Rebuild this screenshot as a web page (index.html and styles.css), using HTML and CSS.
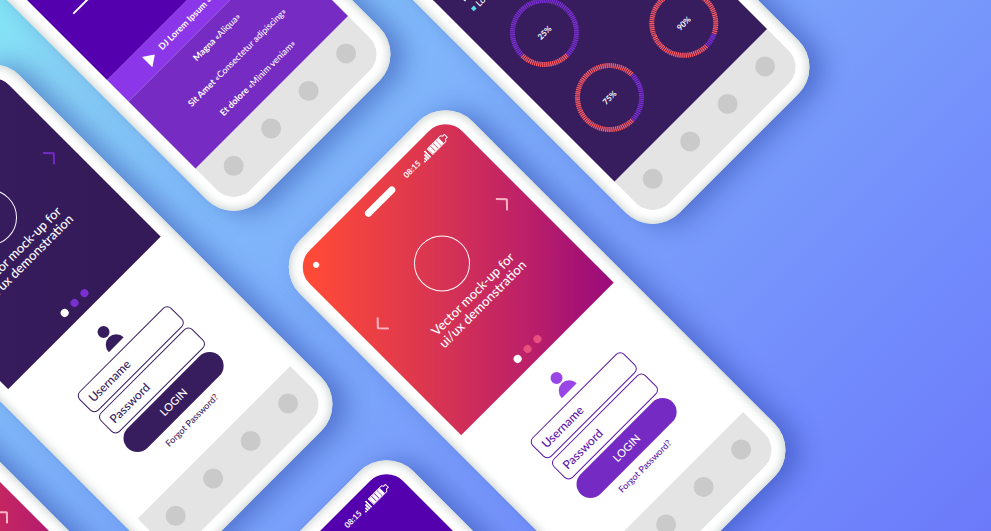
FILE: index.html
```
<!DOCTYPE html>
<html lang="en">
<head>
<meta charset="utf-8">
<title>App screens</title>
<link rel="stylesheet" href="styles.css">
</head>
<body>
<svg class="defs" aria-hidden="true">
  <symbol id="signal" viewBox="0 0 9 9"><path d="M0 7h1.800v2H0zM2.400 5h1.800v4H2.400zM4.800 2.600h1.800V9H4.800zM7.200 0H9v9H7.200z"/></symbol>
  <symbol id="battery" viewBox="0 0 24 9"><path d="M.5.5H19L20.500 2.500H23v4h-2.500L19 8.500H.5z" fill="none" stroke="currentColor"/><path d="M1 1h3.400v7H1zM5 1h3.400v7H5zM9 1h3.400v7H9zM13 1h3.400v7H13z"/></symbol>
  <symbol id="prev" viewBox="0 0 9 17"><path d="M8.500.5.8 8.500l7.700 8" fill="none" stroke="currentColor" stroke-width="2"/></symbol>
  <symbol id="next" viewBox="0 0 9 17"><path d="M.5.5l7.700 8-7.700 8" fill="none" stroke="currentColor" stroke-width="2"/></symbol>
  <symbol id="person" viewBox="0 0 22 26"><circle cx="11" cy="7" r="6"/><path d="M.5 25a10.500 10.500 0 0 1 21 0z"/></symbol>
</svg>
<main class="canvas">

  <article class="phone at-music">
    <div class="screen">
      <div class="player"><div class="track"></div></div>
      <div class="now"><svg class="play" viewBox="0 0 11 15"><path d="M0 0 11 7.500 0 15z"/></svg><span><b>DJ Lorem Ipsum</b> «Dolor»</span></div>
      <ul class="songs">
        <li><b>Magna</b> «Aliqua»</li>
        <li><b>Sit Amet</b> «Consectetur adipiscing»</li>
        <li><b>Et dolore</b> «Minim veniam»</li>
      </ul>
      <nav class="keys"><i></i><i></i><i></i><i></i></nav>
    </div>
  </article>

  <article class="phone at-stats">
    <div class="screen">
      <div class="board">
        <div class="legend"><b>Is</b><span class="key">Lorem</span></div>
        <div class="rings">
          <svg class="ring" viewBox="0 0 70 70"><path class="rest" pathLength="225" d="M3 35A32 32 0 1 1 35 67"/><path class="part" pathLength="75" d="M35 67A32 32 0 0 1 3 35"/><text x="35" y="38">25%</text></svg>
          <svg class="ring below" viewBox="0 0 70 70"><path class="rest" pathLength="75" d="M67 35A32 32 0 0 1 35 67"/><path class="part" pathLength="225" d="M35 67A32 32 0 1 1 67 35"/><text x="35" y="38">75%</text></svg>
          <svg class="ring below" viewBox="0 0 70 70"><path class="rest" pathLength="21" d="M48.500 64A32 32 0 0 1 35 67"/><path class="part" pathLength="279" d="M35 67A32 32 0 1 1 48.500 64"/><text x="35" y="38">90%</text></svg>
        </div>
      </div>
      <nav class="keys"><i></i><i></i><i></i><i></i></nav>
    </div>
  </article>

  <article class="phone dark at-left">
    <div class="screen">
      <section class="hero">
        <div class="row"><svg class="arrow"><use href="#prev"/></svg><span class="disc"></span><svg class="arrow"><use href="#next"/></svg></div>
        <p class="title">Vector mock-up for<br>ui/ux demonstration</p>
        <div class="dots"><i></i><i></i><i></i></div>
      </section>
      <form class="login">
        <svg class="person"><use href="#person"/></svg>
        <input type="text" placeholder="Username" aria-label="Username">
        <input type="password" placeholder="Password" aria-label="Password">
        <button type="button">LOGIN</button>
        <a href="#">Forgot Password?</a>
      </form>
      <nav class="keys"><i></i><i></i><i></i><i></i></nav>
    </div>
  </article>

  <article class="phone at-corner">
    <div class="screen">
      <section class="hero">
        <div class="row"><svg class="arrow"><use href="#prev"/></svg><span class="disc"></span><svg class="arrow"><use href="#next"/></svg></div>
      </section>
    </div>
  </article>

  <article class="phone violet at-bottom">
    <div class="screen">
      <section class="hero">
        <div class="status"><span class="camera"></span><span class="speaker"></span><span class="time">08:15</span><svg class="signal"><use href="#signal"/></svg><svg class="battery"><use href="#battery"/></svg></div>
      </section>
    </div>
  </article>

  <article class="phone at-center">
    <div class="screen">
      <section class="hero">
        <div class="status"><span class="camera"></span><span class="speaker"></span><span class="time">08:15</span><svg class="signal"><use href="#signal"/></svg><svg class="battery"><use href="#battery"/></svg></div>
        <div class="row"><svg class="arrow"><use href="#prev"/></svg><span class="disc"></span><svg class="arrow"><use href="#next"/></svg></div>
        <p class="title">Vector mock-up for<br>ui/ux demonstration</p>
        <div class="dots"><i></i><i></i><i></i></div>
      </section>
      <form class="login">
        <svg class="person"><use href="#person"/></svg>
        <input type="text" placeholder="Username" aria-label="Username">
        <input type="password" placeholder="Password" aria-label="Password">
        <button type="button">LOGIN</button>
        <a href="#">Forgot Password?</a>
      </form>
      <nav class="keys"><i></i><i></i><i></i><i></i></nav>
    </div>
  </article>
</main>
</body>
</html>
```
FILE: styles.css
```
* { box-sizing: border-box; }

body {
  margin: 0;
  font-family: Lato, "Open Sans", sans-serif;
  font-weight: 500;
  color: #fff;
}

.defs { display: none; }

.canvas {
  position: relative;
  height: 100vh;
  overflow: hidden;
  background: linear-gradient(135deg, #84e6f6 0%, #88d2f6 9%, #82bdfa 24%, #7cabfa 42%, #7899fb 62%, #718afc 80%, #6c7afa 100%);
}

/* Phones lie on a free canvas, each turned an eighth of the way left */
.phone {
  --ink: #5a14a8;
  --accent: #752bc3;
  --figure: #9a45e6;
  --dot: #ea4d7f;
  --arrow: #f8b4c4;
  --hero: linear-gradient(135deg, #ff4a38 6%, #db3650 42%, #bd2168 72%, #9c0b7a 98%);
  position: absolute;
  width: 244px;
  padding: 14px;
  border-radius: 38px;
  background: #fff;
  box-shadow: inset 0 0 8px 2px #ccd4d1, 9px 11px 24px rgba(35, 60, 160, .45);
  transform: rotate(-45deg);
  transform-origin: 0 0;
}

.dark {
  --ink: #371c5e;
  --accent: #371c5e;
  --figure: #371c5e;
  --dot: #7a2fd0;
  --arrow: #7428c4;
  --hero: linear-gradient(135deg, #3a1f62, #341958);
}

.violet { --hero: #5500ae; }

.at-music { left: -122px; top: -129px; }
.at-stats { left: 297px; top: -116px; }
.at-left { left: -180px; top: 221px; }
.at-corner { left: -227px; top: 580px; }
.at-bottom { left: 214px; top: 617px; }
.at-center { left: 273px; top: 267px; }

.screen {
  display: flex;
  flex-direction: column;
  min-height: 475px;
  border-radius: 24px;
  overflow: hidden;
  background: #fff;
}

/* Upper panel */
.hero {
  display: grid;
  grid-template-rows: 75px 56px 52px 55px;
  background: var(--hero);
}

.status {
  grid-row: 1;
  display: grid;
  grid-template-columns: 73px 55px 24px 11px 24px;
  align-items: center;
  height: 30px;
  padding-left: 15px;
}
.camera { width: 6px; height: 6px; border-radius: 50%; background: #fff; }
.speaker { width: 40px; height: 7px; border-radius: 4px; background: #fff; }
.time { font-size: 8px; font-weight: 700; line-height: 10px; }
.signal { width: 9px; height: 9px; fill: #fff; }
.battery { width: 24px; height: 9px; fill: #fff; color: #fff; }

.row {
  grid-row: 2;
  display: flex;
  align-items: center;
  justify-content: space-between;
  padding: 0 16px;
}
.arrow { width: 9px; height: 17px; color: var(--arrow); overflow: visible; }
.disc { width: 56px; height: 56px; border: 1px solid #fff; border-radius: 50%; }

.title {
  grid-row: 3;
  margin: 8px 0 0;
  font-size: 13px;
  line-height: 14px;
  text-align: center;
}

.dots {
  grid-row: 4;
  display: flex;
  justify-content: center;
  gap: 6px;
  padding-top: 37px;
}
.dots i { width: 8px; height: 8px; border-radius: 50%; background: var(--dot); }
.dots i:first-child { background: #fff; }

/* Login form */
.login {
  display: flex;
  flex-direction: column;
  align-items: center;
  gap: 3px;
  height: 183px;
  padding-top: 20px;
}
.person { width: 22px; height: 26px; margin-bottom: 3px; fill: var(--figure); }
.login input {
  width: 130px;
  height: 27px;
  padding: 0 7px;
  border: 1px solid var(--ink);
  border-radius: 6px;
  background: none;
  color: var(--ink);
  font: 500 12px/16px Lato, "Open Sans", sans-serif;
}
.login input::placeholder { color: var(--ink); opacity: 1; }
.login button {
  width: 130px;
  height: 28px;
  padding: 0;
  border: 0;
  border-radius: 14px;
  background: var(--accent);
  color: #fff;
  font: 500 11px/16px Lato, "Open Sans", sans-serif;
}
.login a {
  margin-top: 3px;
  color: var(--ink);
  font-size: 9px;
  line-height: 12px;
  text-decoration: none;
}

/* Bottom keys */
.keys {
  display: flex;
  align-items: center;
  justify-content: center;
  gap: 33px;
  height: 54px;
  padding-bottom: 4px;
  background: #e4e4e4;
}
.keys i { width: 20px; height: 20px; border-radius: 50%; background: #cacaca; }

/* Music player */
.player { height: 296px; padding: 224px 23px 0; background: #5500ae; }
.track { height: 2px; border-radius: 1px; background: #fff; }
.now {
  display: flex;
  align-items: center;
  gap: 8px;
  height: 30px;
  padding-left: 41px;
  background: #8c36ea;
  font-size: 9px;
  line-height: 12px;
  white-space: nowrap;
}
.play { width: 11px; height: 15px; fill: #fff; }
.songs {
  height: 95px;
  margin: 0;
  padding: 2px 0 0;
  background: #762bc3;
  font-size: 9px;
  line-height: 29px;
  text-align: center;
  list-style: none;
}

/* Statistics */
.board { height: 421px; padding: 178px 18px 0 21px; background: #371c5e; }
.legend { display: grid; font-size: 9px; line-height: 14px; }
.key { display: flex; align-items: center; gap: 3px; }
.key::before { content: ""; width: 4px; height: 4px; background: #58dcee; }
.rings {
  display: grid;
  grid-template-columns: 70px 70px;
  gap: 22px 35px;
  margin-top: 25px;
}
.ring { width: 70px; height: 70px; }
.below { grid-row: 2; }
.ring path { fill: none; stroke-width: 5; stroke-dasharray: 2 1; }
.ring .rest { stroke: #7c2fd6; }
.ring .part { stroke: #ff5a60; }
.ring text { fill: #fff; font-size: 8px; font-weight: bold; text-anchor: middle; }
```
